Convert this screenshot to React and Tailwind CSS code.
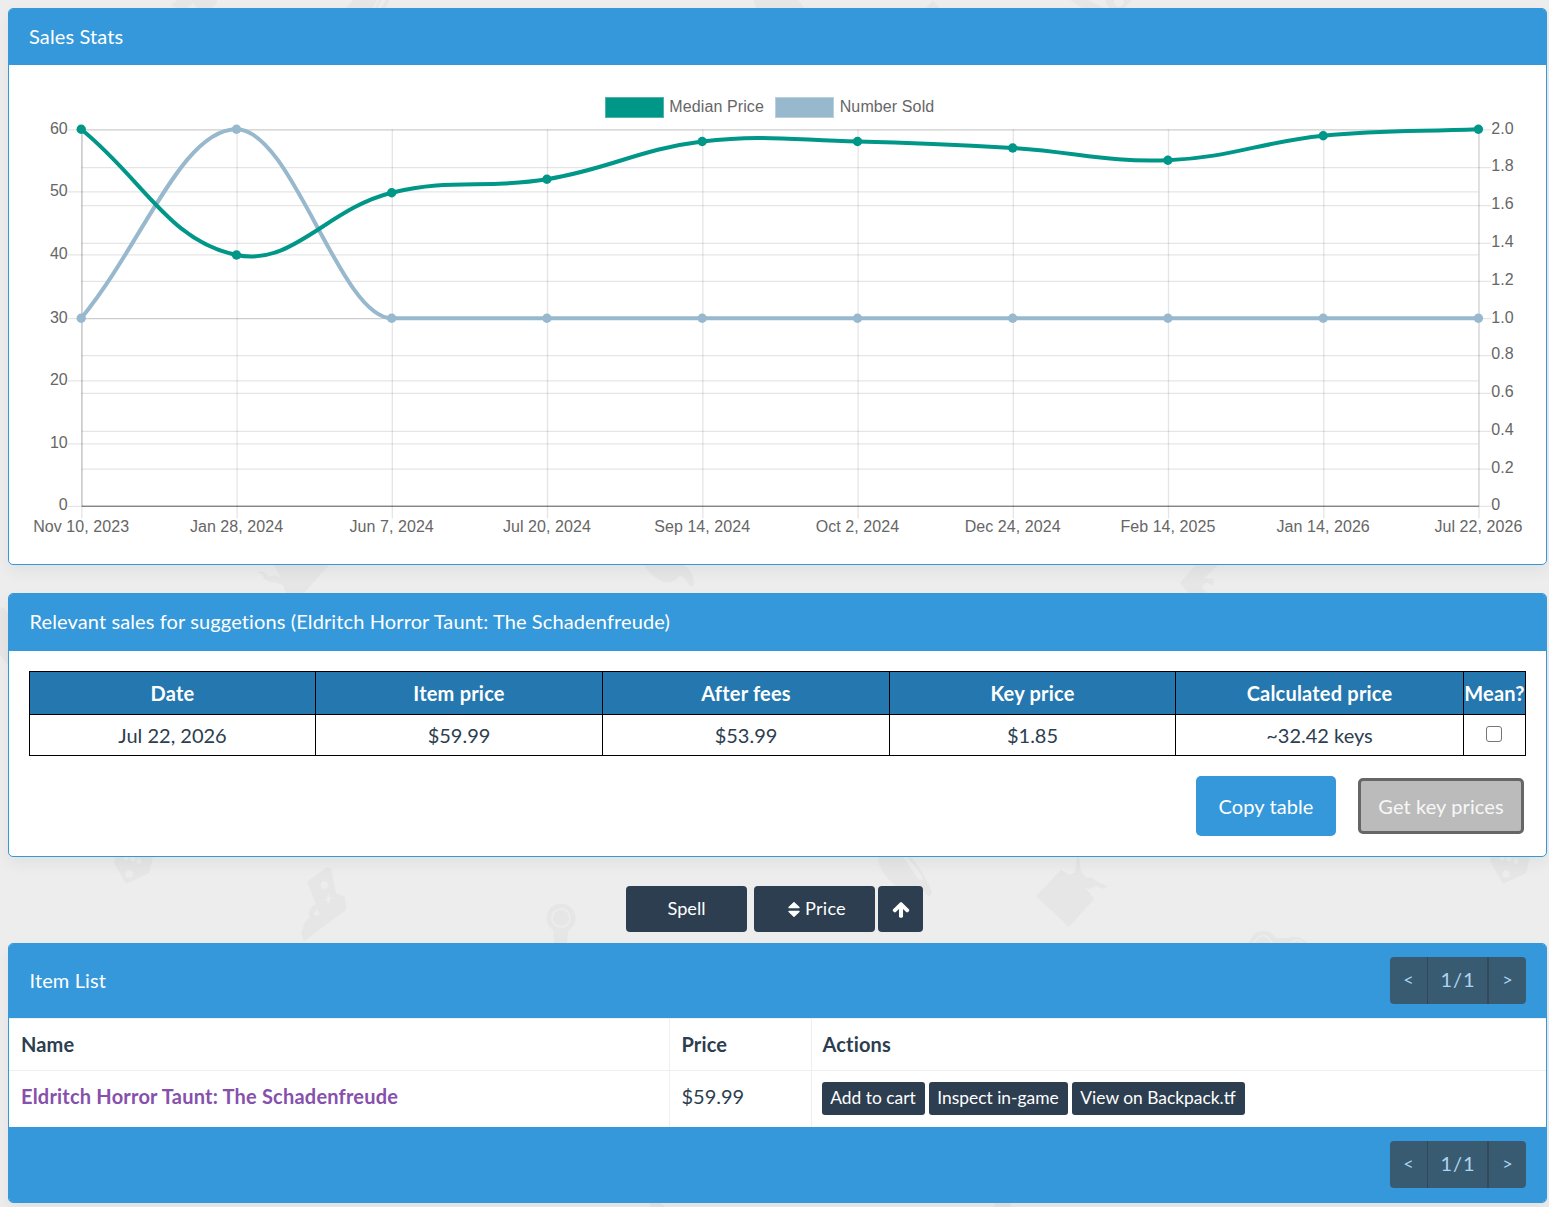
import React from "react";

const xs = [81.2, 236.5, 391.7, 546.9, 702.2, 857.5, 1012.7, 1167.9, 1323.2, 1478.4];
const dates = [
  "Nov 10, 2023", "Jan 28, 2024", "Jun 7, 2024", "Jul 20, 2024", "Sep 14, 2024",
  "Oct 2, 2024", "Dec 24, 2024", "Feb 14, 2025", "Jan 14, 2026", "Jul 22, 2026",
];
const median = [129.2, 255, 192.7, 179.3, 141.5, 141.5, 148, 160.2, 135.8, 129.2];
const sold = [318.2, 129.2, 318.2, 318.2, 318.2, 318.2, 318.2, 318.2, 318.2, 318.2];
const leftTicks = [[60, 129.5, 134], [50, 191.5, 196], [40, 254.5, 259], [30, 318.3, 323], [20, 380.5, 385], [10, 443.5, 448], [0, 506, 510]];
const rightTicks = [
  ["2.0", 129.5, 134], ["1.8", 167.3, 171], ["1.6", 205.3, 209], ["1.4", 243, 247], ["1.2", 281, 285], ["1.0", 318.3, 323],
  ["0.8", 355.3, 359], ["0.6", 393, 397], ["0.4", 431, 435], ["0.2", 468.8, 473], ["0", 506, 510],
];

function spline(ys, tension) {
  const n = ys.length;
  const ctrl = ys.map((y, i) => {
    const p = Math.max(i - 1, 0);
    const q = Math.min(i + 1, n - 1);
    const d0 = Math.hypot(xs[i] - xs[p], y - ys[p]);
    const d1 = Math.hypot(xs[q] - xs[i], ys[q] - y);
    const a = (tension * d0) / (d0 + d1);
    const b = (tension * d1) / (d0 + d1);
    const dx = xs[q] - xs[p];
    const dy = ys[q] - ys[p];
    return {
      ax: xs[i] - a * dx, ay: Math.max(129, y - a * dy),
      bx: xs[i] + b * dx, by: Math.max(129, y + b * dy),
    };
  });
  let d = `M${xs[0]} ${ys[0]}`;
  for (let i = 1; i < n; i++) {
    d += `C${ctrl[i - 1].bx} ${ctrl[i - 1].by} ${ctrl[i].ax} ${ctrl[i].ay} ${xs[i]} ${ys[i]}`;
  }
  return d;
}

const soldPath = "M81.2 318.2C143.3 242.6 182 129.2 236.5 129.2C292 129.2 340 318.2 391.7 318.2H1478.4";

function Chart() {
  return (
    <svg className="block h-[499px] w-full" viewBox="9 65 1537 499" fontFamily="'Liberation Sans', Arial, sans-serif" fontSize="16" fill="#666">
      <rect x="605.5" y="97.5" width="58" height="20" fill="#009688" stroke="#4fb3a9" />
      <text x="669.3" y="112" textLength="94.5">Median Price</text>
      <rect x="775.5" y="97.5" width="58" height="20" fill="#98b9cd" stroke="#b9d0dd" />
      <text x="839.7" y="112" textLength="94.5">Number Sold</text>
      <g stroke="#000" strokeOpacity="0.1" strokeWidth="1.33">
        {xs.map((x, i) => <path key={i} d={`M${x + 0.6} 129.5V518.5`} />)}
        {leftTicks.map(([v, y]) => <path key={v} d={`M68 ${y + 0.3}H1478.5`} />)}
        {rightTicks.map(([v, y]) => <path key={v} d={`M81.5 ${y + 0.3}H1491`} />)}
      </g>
      <path d="M82 129V506.5" stroke="#000" strokeOpacity="0.16" strokeWidth="1.4" />
      <path d="M1479 129V506.5" stroke="#000" strokeOpacity="0.08" strokeWidth="1.4" />
      <path d="M82 506.3H1479" stroke="#000" strokeOpacity="0.35" strokeWidth="1.4" />
      <g textAnchor="end">
        {leftTicks.map(([v, , t]) => <text key={v} x="67.7" y={t}>{v}</text>)}
      </g>
      {rightTicks.map(([v, , t]) => <text key={v} x="1491.3" y={t}>{v}</text>)}
      <g textAnchor="middle" letterSpacing="0.06">
        {dates.map((v, i) => <text key={v} x={xs[i]} y="532">{v}</text>)}
      </g>
      <g fill="#98b9cd">
        <path d={soldPath} fill="none" stroke="#98b9cd" strokeWidth="4" />
        {xs.map((x, i) => <circle key={i} cx={x} cy={sold[i]} r="4.7" />)}
      </g>
      <g fill="#009688">
        <path d={spline(median, 0.4)} fill="none" stroke="#009688" strokeWidth="4" />
        {xs.map((x, i) => <circle key={i} cx={x} cy={median[i]} r="4.7" />)}
      </g>
    </svg>
  );
}

function Backdrop() {
  return (
    <svg className="absolute inset-0 -z-10 h-[1207px] w-[1549px]" viewBox="0 0 1549 1207" fill="#e6e6e6">
      <path d="M171 5l6-5h40v3l-5 5h-15l-4-5-6 5h-10zM353 0h24l-4 8h-27zM379 0h3l-5 8h-2zM386 0h4l-5 8h-4zM753 0h45l6 8h-48zM933 0l7 8h-14zM1070 0h18l16 8h-22zM1105 0h27l-8 8h-15z" />
      <circle cx="1119" cy="2" r="5" fill="#ededed" />
      <path d="M274 565h55l-25 28h-18l-3-8-9-3q-10 0-12-8l-5-1 4-2q7 2 8 6 7-4 12 1z" />
      <path d="M644 565h40q11 9 10 20l-4 2q-3-8-10-12-6 9-16 7-12-5-20-17z" />
      <path d="M1196 565h22l-14 13 10 1-1 7-7-4-4 5 5 6h-18l-9-10z" />
      <path d="M0 607q8 2 8 8v50L0 655z" />
      <path d="M115 857h38l-4 16-23 11-12-21z" />
      <g fill="#ededed"><circle cx="129" cy="874" r="3.7" /><circle cx="126" cy="858" r="2.5" /><circle cx="133" cy="859" r="2.5" /><circle cx="139" cy="861" r="2.5" /></g>
      <path d="M327 867l4 1 5 25 9 4 1 13-42 31-3-8 4-11 5-5q-4-7 6-13l-9-22z" />
      <circle cx="324.500" cy="885" r="3.7" fill="#ededed" />
      <path d="M330 892l-5 9h3l-1 4 5-8h-3zM317 909l3 5-4 2-2-3z" fill="#ededed" />
      <circle cx="561" cy="918" r="14.5" /><path d="M553 926h16l-2 17h-13z" />
      <circle cx="561" cy="918" r="9" fill="none" stroke="#ededed" strokeWidth="1.5" />
      <path d="M878 857h33q16 20 21 36-2 5-5 2l-6-7-25-2q-18-15-18-29z" />
      <path d="M903 857h4q13 14 16 22-3 3-6-2z" fill="#ededed" />
      <path d="M1061 870l9 5 5-3 2-15h2l2 15 6 6q6-2 9 3l11 5-3 3-8-3-7 3-4-2 9 12-25 28-33-31z" />
      <path d="M1490 857h40l-4 16-23 11-12-21z" />
      <g fill="#ededed"><circle cx="1506" cy="874" r="3.7" /><circle cx="1502" cy="858" r="2.5" /><circle cx="1509" cy="859" r="2.5" /><circle cx="1516" cy="861" r="2.5" /></g>
      <path d="M1249 943q4-12 14-12 9 0 13 7h13q10-4 18 5z" />
      <path d="M1254 943q9-15 18 0M1291 943q6-6 12 0" fill="none" stroke="#ededed" strokeWidth="1.5" />
      <path d="M649 1203h11l5 4h-14zM995 1203h16v4h-18z" />
    </svg>
  );
}

function SortIcon() {
  return (
    <svg className="h-[19px] w-[12px]" viewBox="-30 0 1084 1792" preserveAspectRatio="none" fill="currentColor">
      <path d="M1024 1088q0 26-19 45l-448 448q-19 19-45 19t-45-19l-448-448q-19-19-19-45t19-45 45-19h896q26 0 45 19t19 45zM1024 704q0 26-19 45t-45 19h-896q-26 0-45-19t-19-45 19-45l448-448q19-19 45-19t45 19l448 448q19 19 19 45z" />
    </svg>
  );
}

function ArrowUpIcon() {
  return (
    <svg className="h-[19px] w-[18px]" viewBox="0 0 1664 1792" fill="currentColor">
      <path d="M1611 971q0 51-37 90l-75 75q-38 38-91 38-54 0-90-38l-294-293v704q0 52-37.5 84.5t-90.500 32.500h-128q-53 0-90.500-32.500t-37.500-84.500v-704l-294 293q-36 38-90 38t-90-38l-75-75q-38-38-38-90 0-53 38-91l651-651q35-37 90-37 54 0 91 37l651 651q37 39 37 91z" />
    </svg>
  );
}

function Card({ className, children }) {
  return (
    <section className={`overflow-hidden rounded-[5px] border border-[#3498db] bg-white shadow-[0_7px_16px_rgba(0,0,0,0.05)] ${className}`}>
      {children}
    </section>
  );
}

function Pager() {
  return (
    <div className="mb-0.5 flex h-[47px] w-[136px] overflow-hidden rounded bg-[#395b71] text-center leading-[45px] text-[#add4ef]">
      <span className="w-[38px] border-r border-[#2f4858] text-[18px]">&lt;</span>
      <span className="w-[61px] border-r-2 border-[#36495a] pl-px text-[20px] tracking-[1px]">1/1</span>
      <span className="w-[37px] text-[18px]">&gt;</span>
    </div>
  );
}

const saleCell = "border border-black p-0 text-center";
const saleRows = ["Jul 22, 2026", "$59.99", "$53.99", "$1.85", "~32.42 keys"];
const smallButton = "h-[33px] rounded-[3px] bg-[#2c3e50] text-[17.4px] leading-[32px] text-white whitespace-nowrap";

export default function App() {
  return (
    <div className="relative isolate h-[1207px] w-[1549px] overflow-hidden bg-[#ededed] pt-2 pl-2 font-['Lato',sans-serif] text-[20px] text-[#2c3e50]">
      <Backdrop />
      <Card className="h-[557px] w-[1539px]">
        <h2 className="h-14 bg-[#3498db] pl-5 leading-[54px] tracking-[0.12px] text-white">Sales Stats</h2>
        <Chart />
      </Card>

      <Card className="mt-7 h-[264px] w-[1539px]">
        <h2 className="h-[57px] bg-[#3498db] pl-[20.5px] leading-[54px] tracking-[0.12px] text-white">
          Relevant sales for suggetions (Eldritch Horror Taunt: The Schadenfreude)
        </h2>
        <div className="px-5 pt-5">
          <table className="w-[1497px] table-fixed border-collapse">
            <colgroup>
              <col className="w-[286px]" /><col className="w-[287px]" /><col className="w-[287px]" />
              <col className="w-[286px]" /><col className="w-[288px]" /><col className="w-[62px]" />
            </colgroup>
            <thead>
              <tr className="h-[43px] bg-[#2477af] tracking-[0.2px] text-white">
                {["Date", "Item price", "After fees", "Key price", "Calculated price", "Mean?"].map((h) => (
                  <th key={h} className={saleCell}>{h}</th>
                ))}
              </tr>
            </thead>
            <tbody>
              <tr className="h-[41px]">
                {saleRows.map((v) => <td key={v} className={saleCell}>{v}</td>)}
                <td className={saleCell}>
                  <span className="mx-auto -mt-0.5 block size-4 -translate-x-px rounded-[3px] border border-[#767676]" />
                </td>
              </tr>
            </tbody>
          </table>
          <div className="mt-5 flex items-center justify-end gap-[22px]">
            <button className="h-[60px] w-[140px] rounded-[5px] bg-[#3498db] tracking-[0.1px] text-white">Copy table</button>
            <button className="mr-[2px] h-[56px] w-[166px] rounded-[5px] border-[3px] border-[#666] bg-[#bbb] tracking-[0.1px] whitespace-nowrap text-[#f7f7f7]">Get key prices</button>
          </div>
        </div>
      </Card>

      <div className="mt-[29px] flex pl-[618px] text-[18.2px] text-white">
        <button className="mr-[7px] h-[46px] w-[121px] rounded bg-[#2c3e50]">Spell</button>
        <button className="mr-[3px] flex h-[46px] w-[121px] items-center justify-center gap-[5px] rounded bg-[#2c3e50] pl-[5px] tracking-[0.2px]">
          <SortIcon />Price
        </button>
        <button className="flex h-[46px] w-[45px] items-center justify-center rounded bg-[#2c3e50]"><ArrowUpIcon /></button>
      </div>

      <Card className="mt-[11px] h-[260px] w-[1539px]">
        <div className="flex h-[74px] items-center justify-between bg-[#3498db] pr-5 pl-[20.5px]">
          <h2 className="mb-0.5 tracking-[0.12px] text-white">Item List</h2>
          <Pager />
        </div>
        <table className="h-[109px] w-full table-fixed border-collapse">
          <colgroup><col className="w-[660px]" /><col className="w-[142px]" /><col /></colgroup>
          <tbody>
            <tr className="h-[52px] border-y border-[#ecf0f1] text-left tracking-[0.15px]">
              <th className="border-r border-[#ecf0f1] pb-0.5 pl-3">Name</th>
              <th className="border-r border-[#ecf0f1] pb-0.5 pl-3">Price</th>
              <th className="pb-0.5 pl-[11px]">Actions</th>
            </tr>
            <tr className="h-[56px]">
              <td className="border-r border-[#ecf0f1] pb-1.5 pl-3 font-bold tracking-[0.21px] text-[#8650ac]">Eldritch Horror Taunt: The Schadenfreude</td>
              <td className="border-r border-[#ecf0f1] pb-1.5 pl-3">$59.99</td>
              <td className="p-0 pb-0.5 pl-[10px]">
                <div className="flex gap-1">
                  <button className={`w-[103px] ${smallButton}`}>Add to cart</button>
                  <button className={`w-[139px] ${smallButton}`}>Inspect in-game</button>
                  <button className={`w-[173px] ${smallButton}`}>View on Backpack.tf</button>
                </div>
              </td>
            </tr>
          </tbody>
        </table>
        <div className="flex h-[76px] items-center justify-end bg-[#3498db] pr-5">
          <Pager />
        </div>
      </Card>
    </div>
  );
}
